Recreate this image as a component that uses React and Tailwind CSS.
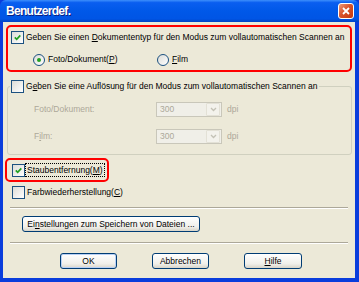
import React from 'react';

const font = "font-['Liberation_Sans',Arial,sans-serif]";

const Check = ({ checked }) => (
  <span className="w-[13px] h-[13px] shrink-0 border border-[#1c5180] bg-[linear-gradient(135deg,#dcdcd7,#ffffff)] flex items-center justify-center">
    {checked && (
      <svg width="9" height="9" viewBox="0 0 9 9">
        <path d="M1.8 4.3 L3.7 6.3 L7.3 2.4" stroke="#21a121" strokeWidth="1.7" fill="none" />
      </svg>
    )}
  </span>
);

const Radio = ({ checked }) => (
  <span className="w-[12px] h-[12px] shrink-0 rounded-full border border-[#1c5180] bg-[linear-gradient(135deg,#dcdcd7,#ffffff)] flex items-center justify-center">
    {checked && <span className="w-[4px] h-[4px] rounded-full bg-[#21a121]" />}
  </span>
);

const Combo = () => (
  <div className="w-[66px] h-[15px] border border-[#c9c7ba] bg-[#f0efe8] flex items-center">
    <span className="flex-1 pl-[3px] text-[#aca899] leading-none">300</span>
    <span className="w-[14px] h-[13px] mr-[1px] bg-[#f3f2ec] border border-[#e3e1d6] rounded-[1px] flex items-center justify-center">
      <svg width="7" height="5" viewBox="0 0 7 5">
        <path d="M1 1 L3.5 3.5 L6 1" stroke="#c3c1b5" strokeWidth="1.3" fill="none" />
      </svg>
    </span>
  </div>
);

const Button = ({ children, className = '', main }) => (
  <button
    className={`h-[16px] rounded-[3px] border border-[#003c74] bg-[linear-gradient(to_bottom,#ffffff,#f0efea_70%,#d8d4c8)] flex items-center justify-center text-black leading-none ${main ? 'shadow-[inset_0_0_0_1px_#b8d0f5]' : ''} ${className}`}
  >
    {children}
  </button>
);

const Sep = () => <div className="mx-[7px] h-[2px] border-t border-[#aca899] border-b border-b-white" />;

export default function App() {
  return (
    <div className={`w-[359px] h-[282px] bg-[#0a3ddc] flex flex-col text-[8.5px] text-black whitespace-nowrap ${font}`}>
      {/* title bar */}
      <div className="h-[22px] shrink-0 rounded-t-[6px] bg-[linear-gradient(to_bottom,#3d8ffc_0%,#0a5ef0_12%,#0058e8_50%,#0055e5_85%,#0043c6_100%)] flex items-center justify-between pl-[6px] pr-[5px]">
        <span className="text-white font-bold text-[12px] tracking-[-0.7px] [text-shadow:1px_1px_0_#0a1f80]">Benutzerdef.</span>
        <span className="w-[16px] h-[16px] rounded-[3px] border border-white bg-[linear-gradient(135deg,#ec9a7c,#d9532c_45%,#c3380e)] flex items-center justify-center">
          <svg width="8" height="8" viewBox="0 0 8 8">
            <path d="M1 1 L7 7 M7 1 L1 7" stroke="white" strokeWidth="1.8" />
          </svg>
        </span>
      </div>

      {/* body */}
      <div className="flex-1 ml-[3px] mr-[4px] mb-[4px] bg-[#ece9d8] flex flex-col">
        {/* red box 1 */}
        <div className="mt-[3px] ml-[3px] w-[346px] h-[47px] border-2 border-[#ff0000] rounded-[5px] flex flex-col pl-[3px] pt-[4px]">
          <div className="flex items-center gap-[2px] h-[13px]">
            <Check checked />
            <span>Geben Sie einen <u>D</u>okumententyp für den Modus zum vollautomatischen Scannen an</span>
          </div>
          <div className="flex items-center h-[13px] mt-[9px] pl-[22px]">
            <Radio checked />
            <span className="ml-[3px] w-[109px]">Foto/Dokument(<u>P</u>)</span>
            <Radio />
            <span className="ml-[3px]"><u>F</u>ilm</span>
          </div>
        </div>

        {/* group 2 */}
        <fieldset className="mt-[8px] ml-[4px] w-[345px] h-[75px] border border-[#d0d0bf] rounded-[3px] px-[3px] pb-0">
          <legend className="-ml-[1px] px-[1px] flex items-center gap-[2px] h-[13px]">
            <Check />
            <span>G<u>e</u>ben Sie eine Auflösung für den Modus zum vollautomatischen Scannen an</span>
          </legend>
          <div className="flex items-center h-[15px] mt-[9px] pl-[23px] text-[#aca899]">
            <span className="w-[122px]">Foto/Dokument:</span>
            <Combo />
            <span className="ml-[5px]">dpi</span>
          </div>
          <div className="flex items-center h-[15px] mt-[12px] pl-[23px] text-[#aca899]">
            <span className="w-[122px]">F<u>i</u>lm:</span>
            <Combo />
            <span className="ml-[5px]">dpi</span>
          </div>
        </fieldset>

        {/* red box 2 */}
        <div className="mt-[3px] ml-[2px] w-[104px] h-[24px] border-2 border-[#ff0000] rounded-[5px] flex items-center pl-[5px]">
          <Check checked />
          <span className="ml-[1px] px-[1px] outline outline-1 outline-dotted outline-black leading-[12px]">Staubentfernung(<u>M</u>)</span>
        </div>

        <div className="flex items-center gap-[2px] h-[13px] mt-[4px] ml-[9px]">
          <Check />
          <span>Farbwiederherstellung(<u>C</u>)</span>
        </div>

        <div className="mt-[8px]"><Sep /></div>

        <Button className="mt-[7px] ml-[19px] w-[178px]">Ei<u>n</u>stellungen zum Speichern von Dateien ...</Button>

        <div className="mt-[10px]"><Sep /></div>

        <div className="mt-[9px] flex ml-[57px] gap-[35px]">
          <Button className="w-[57px]" main>OK</Button>
          <Button className="w-[57px]">Abbrechen</Button>
          <Button className="w-[58px]"><u>H</u>ilfe</Button>
        </div>
      </div>
    </div>
  );
}
